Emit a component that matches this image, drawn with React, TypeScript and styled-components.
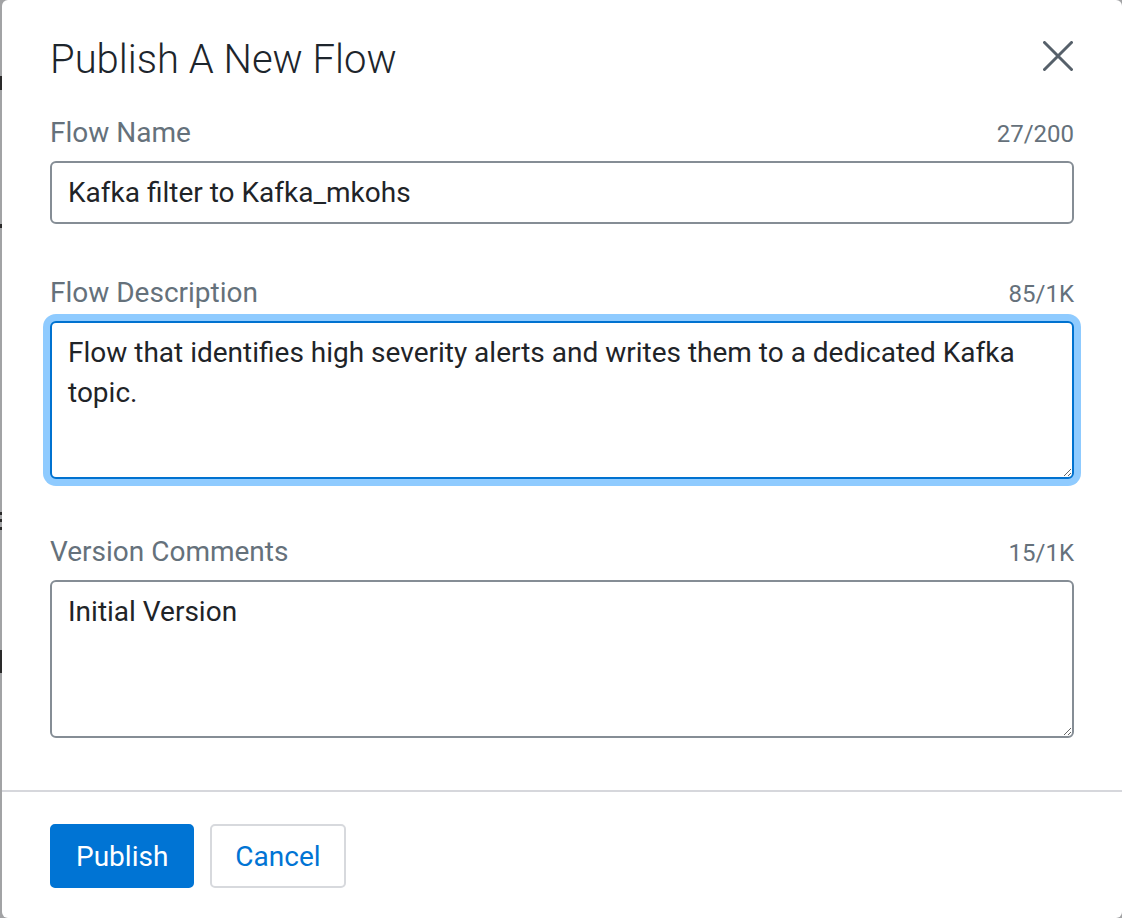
import React, { useEffect, useRef } from "react";
import styled, { createGlobalStyle } from "styled-components";

const Global = createGlobalStyle`
  html, body { margin: 0; padding: 0; background: #a2a3a5; }
  body { font-family: Roboto, "Noto Sans", Arial, sans-serif; }
  * { box-sizing: border-box; }
`;

const Page = styled.div`
  display: flex;
  width: 1122px;
  height: 918px;
  background: #a2a3a5;
  overflow: hidden;
`;

const Backdrop = styled.div`
  position: relative;
  width: 2px;
  flex: none;
`;

const Mark = styled.span<{ $top: number; $h: number }>`
  position: absolute;
  left: 0;
  top: ${(p) => p.$top}px;
  width: 2px;
  height: ${(p) => p.$h}px;
  background: #2a2a2a;
`;

const Dialog = styled.div`
  flex: 1;
  background: #ffffff;
  border-radius: 6px;
  display: flex;
  flex-direction: column;
`;

const Body = styled.div`
  padding: 36px 48px 0 48px;
  display: flex;
  flex-direction: column;
`;

const Header = styled.div`
  display: flex;
  align-items: flex-start;
  justify-content: space-between;
  height: 48px;
  margin-bottom: 32px;
`;

const Title = styled.h2`
  margin: 0;
  font-family: Roboto, sans-serif;
  font-weight: 300;
  font-size: 40px;
  line-height: 48px;
  color: #1d252c;
`;

const CloseButton = styled.button`
  border: none;
  background: transparent;
  padding: 0;
  margin-top: 5px;
  margin-right: 1px;
  width: 30px;
  height: 30px;
  display: flex;
  align-items: center;
  justify-content: center;
  cursor: pointer;
`;

const Field = styled.div<{ $gap: number }>`
  display: flex;
  flex-direction: column;
  margin-bottom: ${(p) => p.$gap}px;
`;

const LabelRow = styled.div`
  display: flex;
  align-items: baseline;
  justify-content: space-between;
  margin-bottom: 10px;
`;

const Label = styled.label`
  font-size: 28px;
  line-height: 34px;
  color: #65717b;
`;

const Counter = styled.span`
  font-size: 24px;
  line-height: 34px;
  color: #65717b;
`;

const TextInput = styled.input`
  height: 63px;
  border: 2px solid #858d95;
  border-radius: 6px;
  padding: 0 16px;
  font-family: Roboto, sans-serif;
  font-size: 28px;
  color: #1f2428;
  outline: none;
`;

const TextArea = styled.textarea<{ $focused?: boolean }>`
  height: 158px;
  border: 2px solid ${(p) => (p.$focused ? "#0072d0" : "#858d95")};
  border-radius: 6px;
  padding: 10px 16px;
  font-family: Roboto, sans-serif;
  font-size: 28px;
  line-height: 40px;
  color: #1f2428;
  outline: none;
  resize: vertical;
  box-shadow: ${(p) => (p.$focused ? "0 0 0 7px #8fcbff" : "none")};
  caret-color: #1f2428;
`;

const Divider = styled.hr`
  margin: 52px 0 0 0;
  border: none;
  border-top: 2px solid #d6d7dc;
`;

const Footer = styled.div`
  display: flex;
  gap: 16px;
  padding: 32px 48px;
`;

const Button = styled.button<{ $primary?: boolean }>`
  height: 64px;
  padding: 0 ${(p) => (p.$primary ? 24 : 23)}px;
  border-radius: 5px;
  font-family: Roboto, sans-serif;
  font-size: 28px;
  cursor: pointer;
  border: 2px solid ${(p) => (p.$primary ? "#0074d4" : "#d7d9dd")};
  background: ${(p) => (p.$primary ? "#0074d4" : "#ffffff")};
  color: ${(p) => (p.$primary ? "#ffffff" : "#0074d4")};
`;

export default function App() {
  const ref = useRef<HTMLTextAreaElement>(null);
  const desc =
    "Flow that identifies high severity alerts and writes them to a dedicated Kafka topic.";
  useEffect(() => {
    const el = ref.current;
    if (el) {
      el.focus();
      el.setSelectionRange(desc.length, desc.length);
    }
  }, []);
  return (
    <>
      <Global />
      <Page>
        <Backdrop>
          <Mark $top={76} $h={14} />
          <Mark $top={224} $h={4} />
          <Mark $top={512} $h={3} />
          <Mark $top={519} $h={3} />
          <Mark $top={527} $h={3} />
          <Mark $top={650} $h={23} />
        </Backdrop>
        <Dialog>
          <Body>
            <Header>
              <Title>Publish A New Flow</Title>
              <CloseButton aria-label="Close">
                <svg width="30" height="30" viewBox="0 0 30 30">
                  <path
                    d="M1.5 1.5 L28.5 28.5 M28.5 1.5 L1.5 28.5"
                    stroke="#56606a"
                    strokeWidth="3"
                    strokeLinecap="round"
                    fill="none"
                  />
                </svg>
              </CloseButton>
            </Header>
            <Field $gap={52}>
              <LabelRow>
                <Label>Flow Name</Label>
                <Counter>27/200</Counter>
              </LabelRow>
              <TextInput defaultValue="Kafka filter to Kafka_mkohs" />
            </Field>
            <Field $gap={56}>
              <LabelRow>
                <Label>Flow Description</Label>
                <Counter>85/1K</Counter>
              </LabelRow>
              <TextArea ref={ref} $focused defaultValue={desc} />
            </Field>
            <Field $gap={0}>
              <LabelRow>
                <Label>Version Comments</Label>
                <Counter>15/1K</Counter>
              </LabelRow>
              <TextArea defaultValue="Initial Version" />
            </Field>
          </Body>
          <Divider />
          <Footer>
            <Button $primary>Publish</Button>
            <Button>Cancel</Button>
          </Footer>
        </Dialog>
      </Page>
    </>
  );
}
